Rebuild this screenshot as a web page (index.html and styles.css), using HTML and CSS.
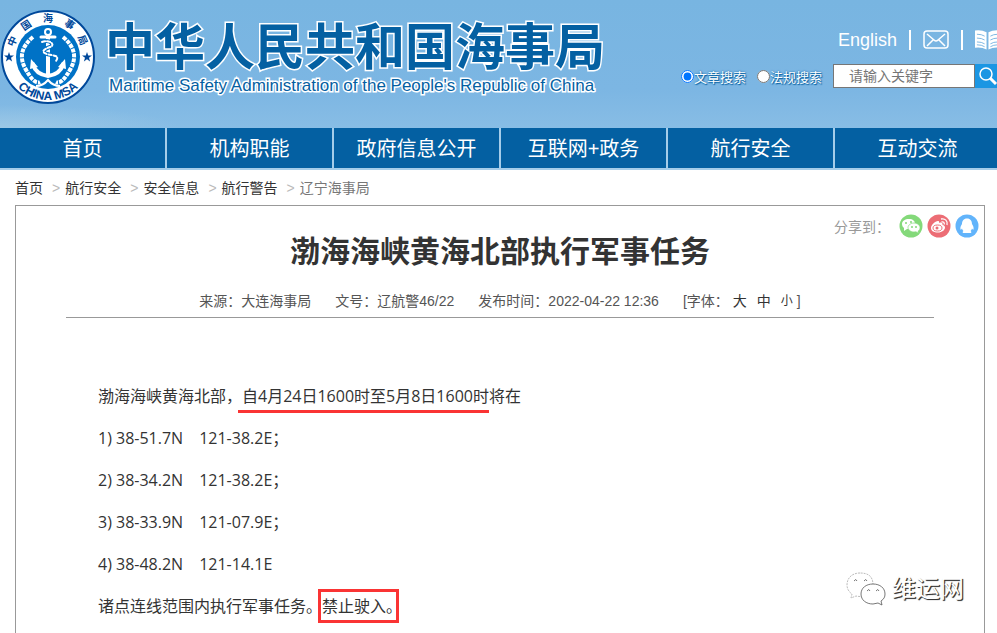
FILE: index.html
```html
<!DOCTYPE html>
<html lang="zh-CN">
<head>
<meta charset="UTF-8">
<meta name="viewport" content="width=device-width, initial-scale=1.0">
<title>渤海海峡黄海北部执行军事任务</title>
<link rel="stylesheet" href="styles.css">
</head>
<body>
<header class="header">
  <a class="brand" href="#">
    <svg class="emblem" viewBox="0 0 96 96" aria-label="中国海事局">
      <circle cx="48" cy="48" r="46" fill="#fff" stroke="#00489a" stroke-width="2"/>
      <circle cx="48" cy="48" r="32" fill="#0072c6"/>
      <g class="emblem-cn">
        <text transform="translate(12 32) rotate(-66)" y="4">中</text>
        <text transform="translate(26 16) rotate(-34)" y="4">国</text>
        <text transform="translate(48 9)" y="4">海</text>
        <text transform="translate(70 15) rotate(34)" y="4">事</text>
        <text transform="translate(83 31) rotate(66)" y="4">局</text>
      </g>
      <path id="arc" d="M6 55A42.500 42.500 0 0 0 90 55" fill="none"/>
      <text class="emblem-en"><textPath href="#arc" startOffset="50%">CHINA MSA</textPath></text>
      <g fill="#00489a">
        <path id="star" d="M9 43l1.200 3.500h3.800l-3 2.300 1.100 3.600L9 50.300l-3.100 2.100 1.100-3.600-3-2.300h3.800z"/>
        <use href="#star" x="78"/>
      </g>
      <g fill="none" stroke="#fff" stroke-linecap="round">
        <circle cx="48" cy="23" r="3" stroke-width="2"/>
        <path d="M41 28h14" stroke-width="3"/>
        <path d="M48 27v39" stroke-width="4"/>
        <path d="M33 55c2 8 8 11 15 12 7-1 13-4 15-12" stroke-width="4"/>
        <path d="M42 33c8-3 14 3 8 5s-10 5-3 7 13 1 9 7" stroke="#0072c6" stroke-width="4"/>
        <path d="M42 33c8-3 14 3 8 5s-10 5-3 7 13 1 9 7" stroke-width="2" stroke-dasharray="3 2"/>
      </g>
      <path d="M31 50l-1 10 8-2zM65 50l1 10-8-2z" fill="#fff"/>
      <g fill="none" stroke="#fff">
        <path d="M33 28Q16 42 25 59T40 73" stroke-width="4" stroke-dasharray="4 1"/>
        <path d="M63 28Q80 42 71 59T56 73" stroke-width="4" stroke-dasharray="4 1"/>
        <path d="M36 77q7 0 12-6 5 6 12 6" stroke-width="2"/>
      </g>
    </svg>
    <span class="brand-text">
      <span class="brand-cn">中华人民共和国海事局</span>
      <span class="brand-en">Maritime Safety Administration of the People's Republic of China</span>
    </span>
  </a>
  <div class="tools">
    <div class="links">
      <a href="#">English</a>
      <span class="bar"></span>
      <a href="#" aria-label="邮箱">
        <svg width="26" height="20" viewBox="0 0 26 20" fill="none" stroke="#fff" stroke-width="1.500">
          <rect x="1" y="1" width="24" height="17" rx="3"/>
          <path d="M4 4l7 6q2 2 4 0l7-6M4 16l6-6M22 16l-6-6"/>
        </svg>
      </a>
      <span class="bar"></span>
      <a href="#" aria-label="手册">
        <svg width="25" height="22" viewBox="0 0 26 22">
          <path d="M0 1q7-1 12 2v18q-5-3-12-2zM26 1q-7-1-12 2v18q5-3 12-2z" fill="#fff"/>
          <path d="M2 5q5 0 8 2M2 9q5 0 8 2M2 13q5 0 8 2M2 16q5 0 8 2M24 5q-5 0-8 2M24 9q-5 0-8 2M24 13q-5 0-8 2M24 16q-5 0-8 2" fill="none" stroke="#7bb6e2"/>
        </svg>
      </a>
    </div>
    <form class="search">
      <label><input type="radio" name="type" checked>文章搜索</label>
      <label><input type="radio" name="type">法规搜索</label>
      <div class="search-box">
        <input type="text" placeholder="请输入关键字" aria-label="关键字">
        <button type="button" aria-label="搜索">
          <svg width="20" height="20" viewBox="0 0 20 20" fill="none" stroke="#fff">
            <circle cx="8" cy="8" r="6" stroke-width="1.500"/>
            <path d="M12 12l6 6" stroke-width="3"/>
          </svg>
        </button>
      </div>
    </form>
  </div>
</header>

<nav class="nav">
  <a href="#">首页</a>
  <a href="#">机构职能</a>
  <a href="#">政府信息公开</a>
  <a href="#">互联网+政务</a>
  <a href="#">航行安全</a>
  <a href="#">互动交流</a>
</nav>

<div class="crumbs">
  <a href="#">首页</a><i>&gt;</i><a href="#">航行安全</a><i>&gt;</i><a href="#">安全信息</a><i>&gt;</i><a href="#">航行警告</a><i>&gt;</i><span>辽宁海事局</span>
</div>

<main class="article">
  <div class="share">
    <span>分享到：</span>
    <a href="#" aria-label="微信">
      <svg viewBox="0 0 24 24">
        <circle cx="12" cy="12" r="11.500" fill="#84d97a"/>
        <path d="M10 5c-4 0-7 2-7 5 0 2 1 3 2 4v3l3-2h2c4 0 6-2 6-5s-2-5-6-5z" fill="#fff"/>
        <path d="M15 9c-3 0-6 2-6 4.500s3 4.500 6 4.500l2-.200 2.500 1.500-.500-2c1.500-1 2-2 2-3.800C21 11 18 9 15 9z" fill="#fff" stroke="#84d97a" stroke-width=".7"/>
        <g fill="#84d97a"><circle cx="7" cy="9" r="1"/><circle cx="12" cy="8" r="1"/><circle cx="13" cy="13" r="1"/><circle cx="17" cy="13" r="1"/></g>
      </svg>
    </a>
    <a href="#" aria-label="微博">
      <svg viewBox="0 0 24 24">
        <circle cx="12" cy="12" r="11.500" fill="#ec6d75"/>
        <path d="M11 7c-3 0-7 4-7 7s3 4.500 7 4.500 7-2.500 7-5c0-1.500-1-2.300-2.500-2.500.500-2-1-3-3.500-2 .300-1.500 0-2-1-2z" fill="#fff"/>
        <ellipse cx="10.500" cy="14" rx="4.500" ry="3" fill="none" stroke="#ec6d75"/>
        <circle cx="10" cy="14" r="1.500" fill="#ec6d75"/>
        <path d="M14 5c4-1 7 2 6 6M14.500 8c2-.500 3 .500 2.800 2.500" fill="none" stroke="#fff" stroke-width="1.300"/>
      </svg>
    </a>
    <a href="#" aria-label="QQ">
      <svg viewBox="0 0 24 24">
        <circle cx="12" cy="12" r="11.500" fill="#62b4fb"/>
        <path d="M12 4.500c-3.500 0-5 2.500-5 5.500-1 1.500-2 3.500-1.500 5.500.500.500 1.200-.500 1.500-1 .2 1 .8 2 1.500 2.600-1 .4-1.300 1.900 0 1.900h7c1.300 0 1-1.500 0-1.900.7-.6 1.300-1.600 1.500-2.600.3.500 1 1.500 1.500 1 .5-2-.5-4-1.500-5.500 0-3-1.500-5.500-5-5.500z" fill="#fff"/>
      </svg>
    </a>
  </div>
  <h1>渤海海峡黄海北部执行军事任务</h1>
  <div class="meta">
    <span>来源：大连海事局</span>
    <span>文号：辽航警46/22</span>
    <span>发布时间：2022-04-22 12:36</span>
    <span>[字体：<span class="sizes"><a href="#">大</a><a href="#">中</a><a class="small" href="#">小</a></span>]</span>
  </div>
  <div class="content">
    <p>渤海海峡黄海北部，<span class="underline">自4月24日1600时至5月8日1600时</span>将在</p>
    <p>1) 38-51.7N　121-38.2E；</p>
    <p>2) 38-34.2N　121-38.2E；</p>
    <p>3) 38-33.9N　121-07.9E；</p>
    <p>4) 38-48.2N　121-14.1E</p>
    <p>诸点连线范围内执行军事任务。<span class="boxed">禁止驶入。</span></p>
  </div>
  <div class="watermark">
    <svg width="40" height="34" viewBox="0 0 40 34" fill="#fff" stroke="#555" stroke-width=".8">
      <path d="M14 1C6 1 1 6 1 13c0 4 2 7 5 9l-1 4 5-2c8 2 17-2 17-11S22 1 14 1z" stroke="#aaa" stroke-dasharray="2 1"/>
      <path d="M27 12c-7 0-12 4-12 10s5 10 12 10l5-1 4 2-1-4c3-2 4-4 4-7 0-6-5-10-12-10z"/>
      <path d="M8 9q2-3 3 0M18 9q2-3 3 0M21 19q2-3 3 0M30 19q2-3 3 0" fill="none"/>
    </svg>
    <span>维运网</span>
  </div>
</main>
</body>
</html>
```
FILE: styles.css
```css
* {
  box-sizing: border-box;
}
html {
  overflow-x: hidden;
}
body {
  margin: 0;
  min-width: 1000px;
  background: #fff;
  color: #333;
  font-family: "Liberation Sans", "Noto Sans CJK SC", sans-serif;
  font-size: 14px;
}
a {
  color: inherit;
  text-decoration: none;
}
svg {
  display: block;
}

/* header */
.header {
  display: flex;
  justify-content: space-between;
  height: 128px;
  background: radial-gradient(ellipse at 0 100%, #9cc8e6 0, transparent 180px), linear-gradient(#78b5e1 0, #7cb6e3 70%, #88bde5 100%);
}
.brand {
  display: flex;
  gap: 9px;
  padding-top: 9px;
}
.emblem {
  width: 96px;
  height: 96px;
}
.emblem text {
  fill: #00489a;
  text-anchor: middle;
}
.emblem-cn {
  font-size: 10px;
  font-weight: bold;
}
.emblem-en {
  font-size: 12px;
  font-weight: bold;
}
.brand-text {
  display: flex;
  flex-direction: column;
  padding-top: 11px;
  color: #0460a2;
  -webkit-text-stroke: 3px #fff;
  paint-order: stroke fill;
  white-space: nowrap;
}
.brand-cn {
  font-size: 50px;
  font-weight: bold;
  line-height: 56px;
}
.brand-en {
  padding-left: 4px;
  font-size: 17px;
  line-height: 20px;
}
.tools {
  display: flex;
  flex-direction: column;
  gap: 12px;
  padding-top: 28px;
}
.links {
  display: flex;
  align-items: center;
  justify-content: flex-end;
  gap: 12px;
  height: 24px;
  color: #fff;
  font-size: 18px;
}
.bar {
  width: 2px;
  height: 20px;
  background: #fff;
}
.search {
  display: flex;
  align-items: center;
  gap: 11px;
}
.search label {
  display: flex;
  align-items: center;
  color: #fff;
  font-size: 13px;
  text-shadow: 1px 1px 1px #0460a2, 0 0 2px #0460a2;
}
.search input[type="radio"] {
  width: 13px;
  height: 13px;
  margin: 0;
}
.search-box {
  display: flex;
  height: 24px;
}
.search-box input {
  width: 142px;
  padding: 0 15px;
  border: 1px solid #767676;
  background: #fff;
  font: inherit;
}
.search-box input::placeholder {
  color: #757575;
}
.search-box button {
  padding: 0 2px 0 3px;
  border: 0;
  background: #1b96e3;
}

/* nav */
.nav {
  display: grid;
  grid-template-columns: repeat(6, 1fr);
  gap: 2px;
  border-bottom: 2px solid #a5cdea;
  background: #a5cdea;
}
.nav a {
  padding-top: 2px;
  background: #0460a2;
  color: #fff;
  font-size: 20px;
  line-height: 38px;
  text-align: center;
}

.crumbs {
  padding: 1px 15px 0;
  line-height: 34px;
}
.crumbs i {
  margin: 0 5px 0 9px;
  color: #bbb;
  font-style: normal;
}
.crumbs span {
  color: #777;
}

/* article */
.article {
  position: relative;
  margin: 0 15px;
  padding: 26px 50px 6px;
  border: 1px solid #999;
  border-bottom: 0;
}
.share {
  position: absolute;
  top: 8px;
  right: 5px;
  display: flex;
  align-items: center;
  gap: 4px;
  color: #999;
}
.share span {
  margin-right: 5px;
}
.share svg {
  width: 24px;
  height: 24px;
}
h1 {
  margin: 0;
  font-size: 30px;
  line-height: 40px;
  text-align: center;
}
.meta {
  display: flex;
  justify-content: center;
  gap: 24px;
  padding: 16px 0 3px;
  border-bottom: 1px solid #999;
  color: #555;
  line-height: 26px;
}
.sizes {
  display: inline-flex;
  gap: 10px;
  padding: 0 4px;
}
.sizes a {
  color: #333;
}
.sizes .small {
  font-size: 12px;
}
.content {
  padding: 57px 32px 0;
  font-family: "Open Sans", "Noto Sans CJK SC", sans-serif;
  font-size: 16px;
}
.content p {
  margin: 0;
  line-height: 42px;
}
.underline {
  padding: 0 0 3px 4px;
  margin-left: -4px;
  border-bottom: 3px solid #fa3434;
}
.boxed {
  display: inline-block;
  width: 81px;
  margin-left: -4px;
  padding-left: 1px;
  border: 3px solid #fa3434;
  line-height: 28px;
  white-space: nowrap;
}
.watermark {
  position: absolute;
  right: 20px;
  bottom: 26px;
  display: flex;
  align-items: center;
  gap: 6px;
  color: #fff;
  font-size: 24px;
  line-height: 36px;
  text-shadow: 1px 1px 1px #333, 1px 1px 0 #555;
}
```
